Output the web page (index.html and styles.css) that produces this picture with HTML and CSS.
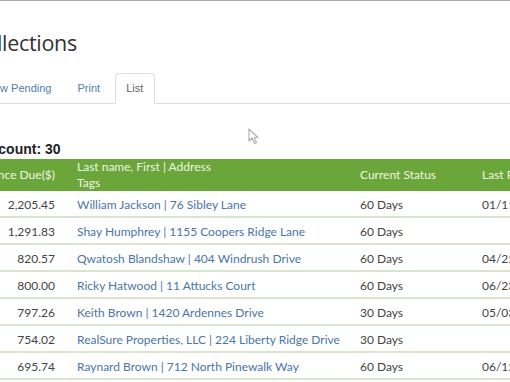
FILE: index.html
```html
<!DOCTYPE html>
<html lang="en">
<head>
    <meta charset="UTF-8">
    <meta name="viewport" content="width=device-width, initial-scale=1.0">
    <title>Collections</title>
    <link rel="stylesheet" href="styles.css">
</head>
<body>
    <div class="topbar"></div>

    <div class="page">
        <h1 class="title">Collections</h1>

        <ul class="tabs">
            <li><a>Review Pending</a></li>
            <li><a>Print</a></li>
            <li class="active"><a>List</a></li>
        </ul>

        <p class="count">Total count: 30</p>

        <table class="grid">
            <thead>
                <tr>
                    <th class="num">Balance Due($)</th>
                    <th class="name">Last name, First | Address<br>Tags</th>
                    <th class="status">Current Status</th>
                    <th class="last">Last Payment</th>
                </tr>
            </thead>
            <tbody>
                <tr>
                    <td class="num">2,205.45</td>
                    <td class="name"><a>William Jackson | 76 Sibley Lane</a></td>
                    <td>60 Days</td>
                    <td>01/11/2017</td>
                </tr>
                <tr>
                    <td class="num">1,291.83</td>
                    <td class="name"><a>Shay Humphrey | 1155 Coopers Ridge Lane</a></td>
                    <td>60 Days</td>
                    <td></td>
                </tr>
                <tr>
                    <td class="num">820.57</td>
                    <td class="name"><a>Qwatosh Blandshaw | 404 Windrush Drive</a></td>
                    <td>60 Days</td>
                    <td>04/25/2017</td>
                </tr>
                <tr>
                    <td class="num">800.00</td>
                    <td class="name"><a>Ricky Hatwood | 11 Attucks Court</a></td>
                    <td>60 Days</td>
                    <td>06/23/2017</td>
                </tr>
                <tr>
                    <td class="num">797.26</td>
                    <td class="name"><a>Keith Brown | 1420 Ardennes Drive</a></td>
                    <td>30 Days</td>
                    <td>05/03/2017</td>
                </tr>
                <tr>
                    <td class="num">754.02</td>
                    <td class="name"><a>RealSure Properties, LLC | 224 Liberty Ridge Drive</a></td>
                    <td>30 Days</td>
                    <td></td>
                </tr>
                <tr>
                    <td class="num">695.74</td>
                    <td class="name"><a>Raynard Brown | 712 North Pinewalk Way</a></td>
                    <td>60 Days</td>
                    <td>06/15/2017</td>
                </tr>
            </tbody>
        </table>
    </div>

    <!-- mouse pointer caught in the capture -->
    <svg class="cursor" width="12" height="17" viewBox="0 0 12 17">
        <path d="M1 1 L1 13 L4 10 L6.5 15.5 L8.5 14.5 L6 9.5 L10 9.5 Z" fill="#fff" stroke="#9a9a9a" stroke-width="1.2" stroke-linejoin="round"/>
    </svg>
</body>
</html>
```

FILE: styles.css
```css
:root {
    --green: #6aa63a;
    --head-text: #eef6e4;
    --row-line: #d9e5cc;
    --link: #4a75ad;
    --text: #444;
}
html, body {
    margin: 0;
    padding: 0;
    background: #fff;
    overflow: hidden;
}
body {
    font-family: "Liberation Sans", Arial, sans-serif;
    color: var(--text);
    width: 510px;
    height: 382px;
}
.topbar {
    height: 1px;
    background: #a8a8a8;
}

.page {
    margin-left: -38px;
    width: 640px;
}

.title {
    margin: 27px 0 0 9px;
    font-family: "Open Sans", sans-serif;
    font-weight: 400;
    font-size: 21.5px;
    letter-spacing: -0.3px;
    line-height: 30px;
    color: #333;
}

.tabs {
    list-style: none;
    margin: 15px 0 0 -1.5px;
    padding: 0;
    display: flex;
    border-bottom: 1px solid #dddddd;
}
.tabs li {
    margin: 0 3px -1px 0;
}
.tabs a {
    display: block;
    padding: 6px 10.5px;
    font-size: 11px;
    line-height: 17px;
    color: #4d7fb5;
    border: 1px solid transparent;
    border-radius: 4px 4px 0 0;
}
.tabs .active a {
    color: #666;
    background: #fff;
    border-color: #dddddd #dddddd transparent;
}

.count {
    margin: 36px 0 1px;
    font-size: 14px;
    line-height: 18px;
    font-weight: 700;
    color: #222;
}

.grid {
    border-collapse: collapse;
    font-family: Lato, "Liberation Sans", sans-serif;
    font-size: 12px;
    table-layout: fixed;
    width: 700px;
}
.grid th,
.grid td {
    padding: 0 11px;
    white-space: nowrap;
}
.grid th {
    background: var(--green);
    color: var(--head-text);
    font-weight: 400;
    text-align: left;
    vertical-align: middle;
    line-height: 16px;
    height: 31px;
}
.grid td {
    padding-top: 2px;
    height: 23px;
    line-height: 18px;
    border-bottom: 2px solid var(--row-line);
}
.grid .num {
    width: 82px;
    text-align: right;
}
.grid .name {
    width: 261px;
}
.grid th.status {
    width: 100px;
}
.grid td a {
    color: var(--link);
}

.cursor {
    position: absolute;
    left: 248px;
    top: 128px;
    opacity: 0.75;
}
```
